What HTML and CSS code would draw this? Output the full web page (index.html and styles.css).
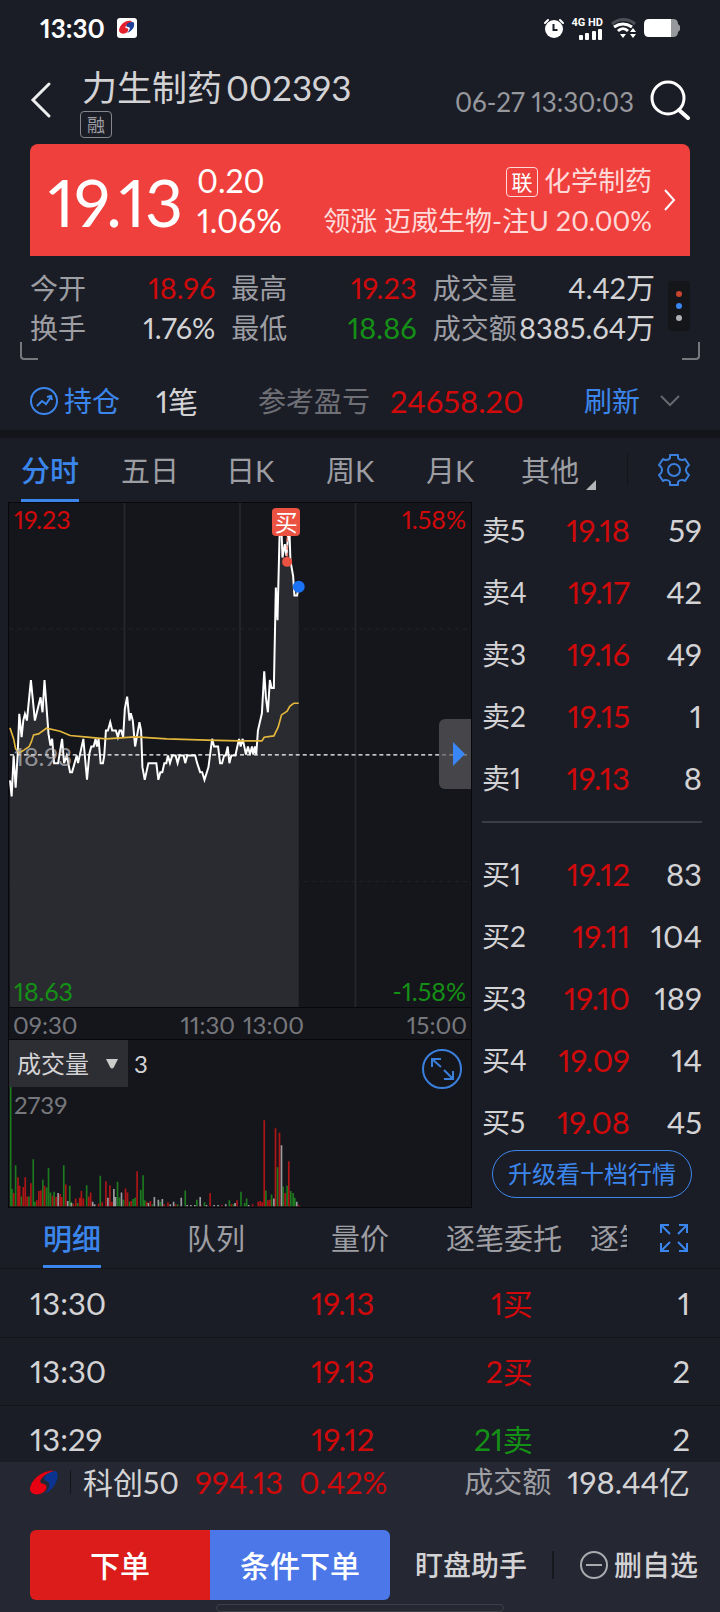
FILE: index.html
```html
<!DOCTYPE html>
<html lang="zh-CN">
<head>
    <meta charset="UTF-8">
    <meta name="viewport" content="width=device-width, initial-scale=1.0">
    <title>力生制药 002393</title>
    <link rel="stylesheet" href="styles.css">
</head>
<body>
    <!-- Status bar -->
    <div class="status-bar">
        <span class="clock">13:30</span>
        <svg class="app-badge" width="20" height="20" viewBox="0 0 20 20">
            <rect width="20" height="20" rx="3" fill="#fff"/>
            <path d="M14 3C8 2 3 7 2 12c0 3 4 5 7 3 3-2 3-5 0-5-1 0-1-1 0-2 2-2 4-3 6-4z" fill="#e3202b"/>
            <path d="M10 6c2-2 6-3 7-1 1 4-2 8-7 10 3-3 4-6 1-6-2 0-2-2-1-3z" fill="#20409a"/>
        </svg>
        <div class="status-icons">
            <svg width="20" height="20" viewBox="0 0 20 20">
                <circle cx="10" cy="11" r="9" fill="#fff"/>
                <path d="M1 5l3-3M19 5l-3-3" stroke="#fff" stroke-width="2" stroke-linecap="round"/>
                <path d="M9.500 6v6h4" stroke="#1b1d26" stroke-width="2" fill="none"/>
            </svg>
            <div class="signal">
                <span>4G HD</span>
                <svg width="24" height="11" viewBox="0 0 24 11" fill="#fff">
                    <rect x="0" y="6" width="4" height="5" rx="1"/>
                    <rect x="6" y="4" width="4" height="7" rx="1"/>
                    <rect x="13" y="2" width="4" height="9" rx="1"/>
                    <rect x="19" y="0" width="4" height="11" rx="1"/>
                </svg>
            </div>
            <svg width="25" height="20" viewBox="0 0 25 20" fill="none" stroke="#fff" stroke-width="3">
                <path d="M1 6c7-6 16-6 23 0" stroke="#4d4f57"/>
                <path d="M3 9c6-4 12-4 18 0M7 13c3-3 7-3 10 0"/>
                <path d="M9 16h6l-3 4z" fill="#fff" stroke="none"/>
                <path d="M19 14l3-4 3 4zM19 16l3 4 3-4z" fill="#fff" stroke="none"/>
            </svg>
            <svg width="36" height="18" viewBox="0 0 36 18">
                <path d="M5 0h22v18H5q-5 0-5-5V5q0-5 5-5z" fill="#fff"/>
                <path d="M27 0h2q5 0 5 5l2 2v4l-2 2q0 5-5 5h-2z" fill="#97989c"/>
            </svg>
        </div>
    </div>

    <!-- Stock title -->
    <header class="header">
        <button class="icon-button back" type="button" aria-label="返回">
            <svg width="22" height="38" viewBox="0 0 22 38"><path d="M19 3L3 19l16 16" fill="none" stroke="#eee" stroke-width="3" stroke-linecap="round"/></svg>
        </button>
        <div class="stock-name">
            <h1>力生制药<span class="code">002393</span></h1>
            <span class="tag">融</span>
        </div>
        <span class="quote-time">06-27 13:30:03</span>
        <button class="icon-button" type="button" aria-label="搜索">
            <svg width="40" height="40" viewBox="0 0 40 40" fill="none" stroke="#fff" stroke-width="3" stroke-linecap="round"><circle cx="18" cy="18" r="16"/><path d="M29 30l9 8" stroke-width="4"/></svg>
        </button>
    </header>

    <!-- Price card -->
    <a class="price-card" href="#sector">
        <span class="last-price">19.13</span>
        <div class="change">
            <div>0.20</div>
            <div>1.06%</div>
        </div>
        <div class="sector">
            <div><span class="sector-tag">联</span>化学制药</div>
            <div>领涨 迈威生物-注U 20.00%</div>
        </div>
        <svg width="12" height="22" viewBox="0 0 12 22"><path d="M1 1l9 10-9 10" fill="none" stroke="#fff" stroke-width="2"/></svg>
    </a>

    <!-- Day stats -->
    <section class="stats">
        <div class="stat-grid">
            <div class="stat"><span>今开</span><b class="up">18.96</b></div>
            <div class="stat"><span>最高</span><b class="up">19.23</b></div>
            <div class="stat"><span>成交量</span><b>4.42万</b></div>
            <div class="stat"><span>换手</span><b>1.76%</b></div>
            <div class="stat"><span>最低</span><b class="down">18.86</b></div>
            <div class="stat"><span>成交额</span><b>8385.64万</b></div>
        </div>
        <button class="more" type="button" aria-label="更多">
            <i class="dot red"></i><i class="dot blue"></i><i class="dot gray"></i>
        </button>
        <i class="corner left"></i>
        <i class="corner right"></i>
    </section>

    <!-- Position -->
    <section class="position">
        <svg width="28" height="28" viewBox="0 0 28 28" fill="none" stroke="#3b86ec"><circle cx="14" cy="14" r="13" stroke-width="2"/><path d="M7 19l5-5 4 3 5-7M17 10l4-1 1 4" stroke-width="2"/></svg>
        <a class="hold" href="#hold">持仓</a>
        <span class="count">1笔</span>
        <span class="profit-label">参考盈亏</span>
        <span class="profit up">24658.20</span>
        <button class="refresh" type="button">刷新</button>
        <svg width="20" height="12" viewBox="0 0 20 12"><path d="M1 1l9 9 9-9" fill="none" stroke="#66686f" stroke-width="2"/></svg>
    </section>

    <!-- Chart tabs -->
    <nav class="chart-nav">
        <div class="chart-tabs">
            <button class="tab active" type="button"><span>分时</span></button>
            <button class="tab" type="button"><span>五日</span></button>
            <button class="tab" type="button"><span>日K</span></button>
            <button class="tab" type="button"><span>周K</span></button>
            <button class="tab" type="button"><span>月K</span></button>
            <button class="tab other" type="button"><span>其他</span></button>
        </div>
        <button class="icon-button settings" type="button" aria-label="设置">
            <svg width="32" height="32" viewBox="0 0 32 32" fill="none" stroke="#3b7fdc" stroke-width="2" stroke-linejoin="round">
                <path d="M12 1h8v3q1 2 4 2 2 0 3-1l4 6-2 2q-2 3 0 6l2 2-4 6q-1-1-3-1-3 0-4 2v3h-8v-3q-1-2-4-2-2 0-3 1l-4-6 2-2q2-3 0-6l-2-2 4-6q1 1 3 1 3 0 4-2z"/>
                <circle cx="16" cy="16" r="6"/>
            </svg>
        </button>
    </nav>

    <main class="quote">
        <div class="charts">
            <div class="price-chart">
                <svg class="plot" viewBox="24 6 1392 1515" preserveAspectRatio="none" fill="none">
                    <path d="M372 6V1521M720 6V1521M1068 6V1521" stroke="#27282d" stroke-width="5"/>
                    <path d="M24 385H1416M24 1144H1416" stroke="#222328" stroke-width="3" stroke-dasharray="12 12"/>
                    <path fill="#2a2b30" d="M27 1521V840L32 888 38 765 44 862 50 765 55 640 62 710 72 640 78 660 90 538 102 660 119 590 125 635 131 538 143 700 149 735 154 715 160 788 172 788 184 715 190 788 198 765 208 815 214 815 228 765 232 788 248 715 259 838 266 760 285 715 289 738 294 715 300 788 307 788 311 765 316 690 322 690 329 665 335 690 346 690 352 710 357 690 362 690 368 710 373 625 380 588 387 660 391 638 397 660 404 738 417 665 422 690 426 800 433 838 444 788 468 788 474 838 480 815 486 815 498 765 585 765 600 815 613 838 625 800 636 715 642 738 654 738 660 788 683 738 688 788 706 765 717 715 738 762 769 762 774 690 786 638 793 512 804 635 810 538 822 562 828 260 833 358 839 110 848 170 860 165 868 90 872 180 880 225 884 284 897 258V1521z"/>
                    <path stroke="#fff" stroke-width="6" d="M27 840L32 888 38 765 44 862 50 765 55 640 62 710 67 660 72 640 78 660 90 538 102 660 119 590 125 635 131 538 143 700 149 735 154 715 160 788 172 788 184 715 190 788 198 765 208 815 214 815 228 765 232 788 248 715 259 838 266 760 272 738 279 738 285 715 289 738 294 715 300 788 307 788 311 765 316 690 322 690 329 665 335 690 346 690 352 710 357 690 362 690 368 710 373 625 380 588 387 660 391 638 397 660 404 738 417 665 422 690 426 800 433 838 444 788 468 788 474 838 480 815 486 815 492 788 498 788 503 765 509 788 516 765 526 765 532 788 538 765 550 765 555 788 561 765 585 765 591 788 600 815 606 815 613 838 625 800 636 715 642 738 654 738 660 788 666 788 672 765 677 765 683 738 688 788 694 765 706 765 717 715 722 738 728 715 738 762 744 738 750 762 756 738 760 762 765 738 769 762 774 690 786 638 793 512 798 590 804 635 810 538 815 562 822 562 828 260 833 358 839 110 844 60 848 170 855 130 860 165 868 60 872 180 880 225 884 284 892 284 897 258"/>
                    <path stroke="#e3b63c" stroke-width="5" d="M27 682L38 715 44 745 55 757 70 748 85 738 92 722 98 703 113 700 137 683 178 692 208 705 260 710 316 715 404 709 500 715 620 719 717 721 786 721 793 710 822 706 835 680 845 643 862 632 870 617 882 608 897 608"/>
                    <path d="M27 763H1410" stroke="#fff" stroke-width="4" stroke-dasharray="12 9"/>
                    <path d="M862 108V170" stroke="#ec5242" stroke-width="3" stroke-dasharray="15 9"/>
                    <circle cx="862" cy="183" r="15" fill="#ec5242"/>
                    <circle cx="897" cy="258" r="18" fill="#1a73f5"/>
                </svg>
                <span class="label top-left up">19.23</span>
                <span class="label top-right up">1.58%</span>
                <span class="label mid-left">18.93</span>
                <span class="label bottom-left down">18.63</span>
                <span class="label bottom-right down">-1.58%</span>
                <span class="buy-mark">买</span>
                <button class="drawer" type="button" aria-label="展开">
                    <svg width="12" height="24" viewBox="0 0 12 24"><path d="M0 0l12 12L0 24z" fill="#3b86f5"/></svg>
                </button>
            </div>
            <div class="time-axis">
                <span>09:30</span>
                <span class="noon"><span>11:30</span><span>13:00</span></span>
                <span>15:00</span>
            </div>
            <div class="volume-chart">
                <svg class="plot" viewBox="24 180 1392 504" preserveAspectRatio="none" fill="none" stroke-width="5">
                    <path stroke="#1d7a1f" d="M29 682V320M33 682V630M44 682V558M61 682V652M84 682V652M97 682V540M102 682V668M126 682V602M137 682V625M143 682V566M149 682V640M160 682V638M189 682V558M207 682V620M212 682V668M231 682V672M258 682V618M299 682V590M351 682V608M357 682V655M369 682V662M387 682V668M398 682V660M404 682V656M421 682V632M428 682V588M433 682V664M456 682V676M480 682V668M532 682V676M555 682V634M590 682V662M613 682V670M688 682V664M700 682V676M723 682V638M734 682V672M740 682V658M798 682V634M815 682V646M833 682V564M850 682V622M862 682V620M873 682V636M880 682V642M885 682V656"/>
                    <path stroke="#b01515" d="M38 682V642M51 682V594M56 682V620M67 682V624M73 682V594M79 682V652M90 682V612M108 682V664M114 682V636M120 682V634M131 682V620M155 682V650M166 682V654M178 682V645M183 682V654M195 682V616M218 682V674M225 682V658M237 682V656M242 682V636M248 682V658M264 682V652M270 682V640M294 682V674M305 682V670M316 682V606M328 682V618M334 682V668M375 682V628M381 682V640M392 682V666M410 682V576M439 682V668M450 682V666M492 682V676M503 682V670M526 682V676M602 682V678M630 682V642M665 682V678M694 682V676M711 682V664M758 682V676M775 682V668M781 682V666M787 682V670M793 682V422M804 682V664M810 682V662M827 682V446M839 682V460M856 682V642M867 682V546M897 682V678"/>
                    <path stroke="#9c9da1" d="M172 682V642M201 682V666M212 682V672M276 682V668M282 682V676M322 682V656M340 682V630M345 682V654M363 682V640M444 682V672M462 682V654M474 682V662M486 682V660M510 682V676M520 682V668M543 682V656M561 682V678M572 682V678M584 682V678M600 682V654M619 682V678M642 682V678M654 682V678M677 682V676M705 682V672M746 682V678M822 682V658M845 682V498M891 682V668"/>
                </svg>
                <div class="volume-head">
                    <div class="indicator">
                        <select aria-label="指标"><option>成交量</option></select>
                        <svg width="14" height="12" viewBox="0 0 14 12"><path d="M1 1h12l-4 8q-2 3-4 0z" fill="#ccc"/></svg>
                    </div>
                    <span class="volume-now">3</span>
                    <button class="icon-button zoom" type="button" aria-label="全屏">
                        <svg width="40" height="40" viewBox="0 0 40 40" fill="none" stroke="#3b7fdc" stroke-width="2"><circle cx="20" cy="20" r="19"/><path d="M19 18l-9-8M10 18v-8h9M22 21l9 9M31 22v8h-9"/></svg>
                    </button>
                </div>
                <div class="volume-max">2739</div>
            </div>
        </div>

        <!-- Order book -->
        <aside class="book">
            <table class="sell">
                <tr><td>卖5</td><td class="up">19.18</td><td>59</td></tr>
                <tr><td>卖4</td><td class="up">19.17</td><td>42</td></tr>
                <tr><td>卖3</td><td class="up">19.16</td><td>49</td></tr>
                <tr><td>卖2</td><td class="up">19.15</td><td>1</td></tr>
                <tr><td>卖1</td><td class="up">19.13</td><td>8</td></tr>
            </table>
            <hr>
            <table>
                <tr><td>买1</td><td class="up">19.12</td><td>83</td></tr>
                <tr><td>买2</td><td class="up">19.11</td><td>104</td></tr>
                <tr><td>买3</td><td class="up">19.10</td><td>189</td></tr>
                <tr><td>买4</td><td class="up">19.09</td><td>14</td></tr>
                <tr><td>买5</td><td class="up">19.08</td><td>45</td></tr>
            </table>
            <button class="upgrade" type="button">升级看十档行情</button>
        </aside>
    </main>

    <!-- Trade details -->
    <nav class="detail-nav">
        <div class="detail-tabs">
            <button class="tab active" type="button"><span>明细</span></button>
            <button class="tab" type="button"><span>队列</span></button>
            <button class="tab" type="button"><span>量价</span></button>
            <button class="tab" type="button"><span>逐笔委托</span></button>
            <button class="tab" type="button"><span>逐笔成交</span></button>
        </div>
        <button class="icon-button expand" type="button" aria-label="展开明细">
            <svg width="28" height="28" viewBox="0 0 28 28" fill="none" stroke="#3b86ec" stroke-width="2"><path d="M1 9V1h8M1 1l9 9M19 1h8v8M27 1l-9 9M1 19v8h8M1 27l9-9M27 19v8h-8M27 27l-9-9"/></svg>
        </button>
    </nav>
    <div class="trades">
        <table>
            <tr><td>13:30</td><td class="up">19.13</td><td class="up">1买</td><td>1</td></tr>
            <tr><td>13:30</td><td class="up">19.13</td><td class="up">2买</td><td>2</td></tr>
            <tr><td>13:29</td><td class="up">19.12</td><td class="down">21卖</td><td>2</td></tr>
        </table>
    </div>

    <footer class="footer">
        <div class="index-bar">
            <svg width="28" height="25" viewBox="0 0 28 25">
                <path d="M25 1C14-1 1 9 0 19c0 5 7 7 12 4 5-2 6-8 2-9-4 0-5-3-2-6 3-4 8-6 13-7z" fill="#e60012"/>
                <path d="M26 1c3 3 2 9-2 15-3 4-6 6-9 8 5-6 6-12 1-13-3-1-2-5 1-7 3-2 6-3 9-3z" fill="#0b3490"/>
            </svg>
            <span class="index-name">科创50</span>
            <span class="index-value up">994.13</span>
            <span class="index-value up">0.42%</span>
            <span class="turnover">成交额</span>
            <span class="index-value">198.44亿</span>
        </div>
        <div class="actions">
            <div class="order-buttons">
                <button class="order" type="button">下单</button>
                <button class="order condition" type="button">条件下单</button>
            </div>
            <button class="action" type="button">盯盘助手</button>
            <button class="action remove" type="button">
                <svg width="28" height="28" viewBox="0 0 28 28" fill="none" stroke="#aaabaf" stroke-width="2"><circle cx="14" cy="14" r="13"/><path d="M6 14h16"/></svg>
                删自选
            </button>
        </div>
        <div class="home-bar"></div>
    </footer>
</body>
</html>
```
FILE: styles.css
```css
* {
    box-sizing: border-box;
}

body {
    margin: 0;
    height: 100vh;
    display: flex;
    flex-direction: column;
    background: #1b1d26;
    color: #d3d3d5;
    font-family: "Lato", "Noto Sans CJK SC", sans-serif;
    font-variant-numeric: proportional-nums;
    font-size: 30px;
    line-height: 40px;
    white-space: nowrap;
    overflow: hidden;
}

body > * {
    flex-shrink: 0;
}

button {
    margin: 0;
    padding: 0;
    border: none;
    background: none;
    color: inherit;
    font: inherit;
}

a {
    color: inherit;
    text-decoration: none;
}

svg {
    display: block;
}

table {
    width: 100%;
    border-collapse: collapse;
    table-layout: fixed;
}

td {
    padding: 0;
    text-align: right;
}

td:first-child {
    text-align: left;
}

.up {
    color: #d0090b;
}

.down {
    color: #159016;
}

/* Status bar */
.status-bar {
    height: 56px;
    padding: 0 40px;
    display: flex;
    align-items: center;
    color: #fff;
}

.clock {
    font-size: 26px;
    font-weight: 700;
    line-height: 28px;
}

.app-badge {
    margin-left: 12px;
}

.status-icons {
    margin-left: auto;
    display: flex;
    align-items: center;
    gap: 8px;
}

.signal {
    display: flex;
    flex-direction: column;
    align-items: flex-end;
    font-family: "Roboto", sans-serif;
    font-size: 11px;
    font-weight: 700;
    line-height: 12px;
}

/* Header */
.header {
    height: 88px;
    padding: 0 30px;
    display: flex;
    align-items: center;
}

.stock-name {
    margin: 6px auto 0 30px;
}

h1 {
    margin: 0 0 6px;
    font-size: 35px;
    font-weight: 400;
    line-height: 36px;
}

.code {
    margin-left: 4px;
}

.tag {
    display: block;
    width: 32px;
    height: 27px;
    margin-left: -2px;
    border: 1px solid #85878d;
    border-radius: 4px;
    color: #9d9ea3;
    font-size: 18px;
    line-height: 26px;
    text-align: center;
}

.quote-time {
    margin-right: 16px;
    padding-top: 3px;
    color: #97989e;
    font-size: 26px;
}

/* Price card */
.price-card {
    height: 112px;
    margin: 0 30px;
    padding: 0 14px 0 18px;
    display: flex;
    align-items: center;
    border-radius: 8px 8px 0 0;
    background: #ef403d;
    color: #fff;
}

.last-price {
    padding-top: 3px;
    font-size: 66px;
}

.change {
    margin-left: 14px;
    padding-top: 2px;
    font-size: 32px;
}

.sector {
    margin: 0 12px 0 auto;
    padding-top: 2px;
    color: #ffd9d8;
    font-size: 27px;
    text-align: right;
}

.sector-tag {
    display: inline-block;
    width: 32px;
    height: 30px;
    margin-right: 6px;
    border: 1px solid #ffd9d8;
    border-radius: 4px;
    color: #fff;
    font-size: 21px;
    line-height: 28px;
    text-align: center;
    vertical-align: 1px;
}

/* Stats */
.stats {
    position: relative;
    height: 112px;
    padding: 12px 30px 0;
    display: flex;
    gap: 13px;
}

.stat-grid {
    flex: 1;
    display: grid;
    grid-template-columns: 5fr 5fr 6fr;
    grid-auto-rows: 40px;
    column-gap: 16px;
    font-size: 28px;
}

.stat {
    display: flex;
    justify-content: space-between;
}

.stat span {
    color: #9d9ea3;
}

.stat b {
    font-size: 29px;
    font-weight: 400;
}

.more {
    width: 22px;
    height: 50px;
    margin-top: 13px;
    display: flex;
    flex-direction: column;
    align-items: center;
    justify-content: center;
    gap: 6px;
    border-radius: 4px;
    background: #15161a;
}

.dot {
    width: 6px;
    height: 6px;
    border-radius: 50%;
}

.dot.red {
    background: #c9432f;
}

.dot.blue {
    background: #3b86f5;
}

.dot.gray {
    background: #b0b0b4;
}

.corner {
    position: absolute;
    bottom: 8px;
    width: 18px;
    height: 18px;
    border-bottom: 2px solid #77787d;
}

.corner.left {
    left: 20px;
    border-left: 2px solid #77787d;
    border-bottom-left-radius: 4px;
}

.corner.right {
    right: 20px;
    border-right: 2px solid #77787d;
    border-bottom-right-radius: 4px;
}

/* Position */
.position {
    height: 70px;
    padding: 4px 40px 0 30px;
    display: flex;
    align-items: center;
    border-bottom: 8px solid #14151a;
    font-size: 28px;
}

.hold {
    margin-left: 6px;
    color: #3b86ec;
}

.count {
    margin-left: 36px;
    font-size: 30px;
}

.profit-label {
    margin-left: 60px;
    color: #6f7076;
}

.profit {
    margin-left: 20px;
    font-size: 31px;
}

.refresh {
    margin: 0 20px 0 auto;
    color: #3b86ec;
}

/* Tabs */
.chart-nav {
    height: 64px;
    display: flex;
    align-items: center;
}

.chart-tabs {
    flex: 1;
    height: 64px;
    display: flex;
}

.tab {
    position: relative;
    flex: 1;
    display: flex;
    justify-content: center;
    color: #9d9ea3;
    font-size: 29px;
}

.tab span {
    padding-top: 12px;
    line-height: 42px;
}

.tab.active span {
    border-bottom: 3px solid #3b86ec;
    color: #3b86ec;
    font-weight: 500;
}

.chart-tabs .tab.active span {
    height: 64px;
}

.other::after {
    content: "";
    position: absolute;
    right: 4px;
    bottom: 12px;
    border-left: 10px solid transparent;
    border-bottom: 10px solid #b4b5b8;
}

.settings {
    margin-left: 27px;
    padding: 0 30px;
    border-left: 1px solid #14151a;
}

/* Charts */
.quote {
    height: 706px;
    padding-left: 8px;
    display: flex;
}

.charts {
    flex: 1;
    border: 1px solid #08080c;
    background: #15161b;
    font-size: 24px;
}

.price-chart {
    position: relative;
    height: 505px;
    border-bottom: 1px solid #08080c;
}

.plot {
    position: absolute;
    top: 0;
    left: 0;
    width: 100%;
    height: 100%;
}

.label {
    position: absolute;
    font-size: 25px;
    line-height: 34px;
}

.top-left,
.mid-left,
.bottom-left {
    left: 5px;
}

.top-right,
.bottom-right {
    right: 5px;
}

.top-left,
.top-right {
    top: -1px;
}

.mid-left {
    top: 236px;
    color: rgba(190, 190, 195, 0.7);
}

.bottom-left,
.bottom-right {
    bottom: -1px;
}

.buy-mark {
    position: absolute;
    left: 57%;
    top: 5px;
    width: 28px;
    height: 28px;
    border-radius: 4px;
    background: #ec5242;
    color: #fff;
    font-size: 23px;
    line-height: 28px;
    text-align: center;
}

.drawer {
    position: absolute;
    right: 0;
    top: 216px;
    width: 32px;
    height: 70px;
    padding-left: 14px;
    border-radius: 6px 0 0 6px;
    background: rgba(90, 90, 94, 0.7);
}

.time-axis {
    height: 32px;
    padding: 0 4px;
    display: flex;
    justify-content: space-between;
    border-bottom: 1px solid #08080c;
    color: #77787d;
    line-height: 34px;
}

.noon {
    display: flex;
    gap: 8px;
}

.volume-chart {
    position: relative;
    height: 167px;
}

.volume-head {
    position: relative;
    height: 47px;
    display: flex;
}

.indicator {
    position: relative;
    width: 119px;
}

.indicator select {
    width: 100%;
    height: 47px;
    padding: 0 8px;
    appearance: none;
    border: none;
    border-radius: 0;
    background: #2d2e33;
    color: #d3d3d5;
    font: inherit;
}

.indicator svg {
    position: absolute;
    right: 9px;
    top: 18px;
}

.volume-now {
    margin-left: 6px;
    line-height: 48px;
}

.zoom {
    margin: 9px 9px 0 auto;
    height: 40px;
}

.volume-max {
    position: relative;
    padding: 2px 5px;
    color: #77787d;
    line-height: 32px;
}

/* Order book */
.book {
    flex: 0 0 248px;
    padding: 0 18px 0 10px;
}

.book td {
    height: 62px;
    font-size: 31px;
}

.book td:first-child {
    width: 50px;
    font-size: 28px;
}

.book td:last-child {
    width: 72px;
}

.sell {
    margin-top: -3px;
}

hr {
    height: 2px;
    margin: 12px 0 20px;
    border: none;
    background: #3a3c47;
}

.upgrade {
    display: block;
    width: 200px;
    height: 48px;
    margin: -3px auto 0;
    border: 1px solid #3b86ec;
    border-radius: 24px;
    color: #3b86ec;
    font-size: 24px;
}

/* Trade details */
.detail-nav {
    height: 61px;
    display: flex;
    align-items: center;
    border-bottom: 1px solid #14151a;
}

.detail-tabs {
    flex: 1;
    height: 60px;
    display: flex;
    overflow: hidden;
}

.detail-tabs .tab {
    flex: 0 0 144px;
}

.detail-tabs .tab span {
    height: 60px;
    padding-top: 10px;
}

.expand {
    padding: 0 32px;
    border-left: 1px solid #14151a;
}

.trades {
    flex: 1 1 0;
    min-height: 0;
    overflow: hidden;
}

.trades td {
    height: 68px;
    border-bottom: 1px solid #14151a;
    font-size: 31px;
}

.trades td:first-child {
    width: 20%;
    padding-left: 30px;
}

.trades td:nth-child(2) {
    width: 32%;
}

.trades td:nth-child(3) {
    width: 22%;
    font-size: 30px;
}

.trades td:last-child {
    padding-right: 30px;
}

/* Footer */
.footer {
    height: 150px;
    background: #252732;
}

.index-bar {
    height: 68px;
    padding: 0 30px 28px;
    display: flex;
    align-items: center;
    gap: 16px;
}

.index-name {
    margin-left: -4px;
    padding-left: 12px;
    border-left: 1px solid #14151a;
    line-height: 24px;
}

.index-value {
    font-size: 31px;
}

.turnover {
    margin-left: auto;
    color: #9d9ea3;
    font-size: 29px;
}

.actions {
    height: 70px;
    padding: 0 22px 0 30px;
    display: flex;
    align-items: center;
    justify-content: space-between;
    font-size: 28px;
}

.order-buttons {
    display: flex;
    border-radius: 6px;
    overflow: hidden;
}

.order {
    width: 180px;
    height: 70px;
    background: #dc1b1b;
    color: #fff;
    font-size: 30px;
    font-weight: 500;
}

.order.condition {
    background: #4b77e8;
}

.action {
    font-weight: 500;
}

.remove {
    padding-left: 26px;
    display: flex;
    align-items: center;
    gap: 6px;
    border-left: 2px solid #17181e;
    line-height: 28px;
}

.home-bar {
    width: 40%;
    height: 8px;
    margin: 4px auto 0;
    border: 1px solid #3c3e48;
    border-radius: 4px;
}
```
